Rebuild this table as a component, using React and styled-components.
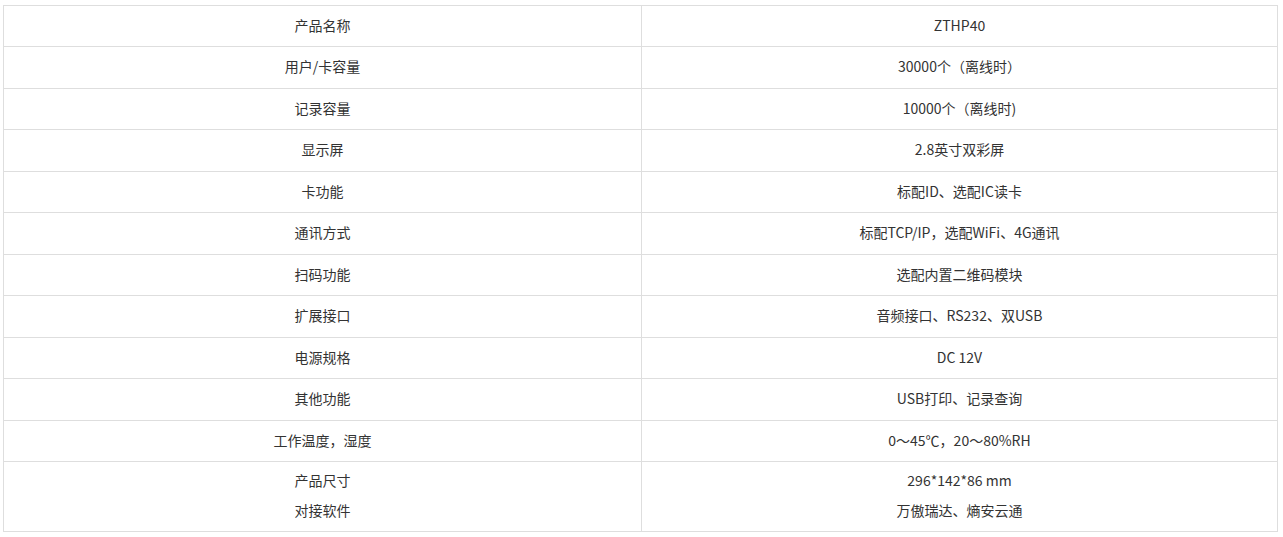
import React from 'react';
import styled, { createGlobalStyle } from 'styled-components';

const GlobalStyle = createGlobalStyle`
  body {
    margin: 0;
    background: #fff;
    font-family: "Microsoft YaHei", "Noto Sans CJK SC", sans-serif;
  }
`;

const Wrap = styled.div`
  padding: 5px 5px 0 3px;
`;

const SpecTable = styled.table`
  width: 1275px;
  border-collapse: collapse;
  table-layout: fixed;
  border: 1px solid #dedede;
`;

const Cell = styled.td`
  border: 1px solid #dedede;
  padding: ${props => (props.tall ? '3px 0 6px' : '9px 0 11px')};
  text-align: center;
  vertical-align: middle;
  font-size: 14px;
  color: #333;
  line-height: ${props => (props.tall ? '30px' : '20.45px')};
  width: ${props => props.width || 'auto'};
`;

const Line = styled.div``;

const rows = [
  ['产品名称', 'ZTHP40'],
  ['用户/卡容量', '30000个（离线时）'],
  ['记录容量', '10000个（离线时)'],
  ['显示屏', '2.8英寸双彩屏'],
  ['卡功能', '标配ID、选配IC读卡'],
  ['通讯方式', '标配TCP/IP，选配WiFi、4G通讯'],
  ['扫码功能', '选配内置二维码模块'],
  ['扩展接口', '音频接口、RS232、双USB'],
  ['电源规格', 'DC 12V'],
  ['其他功能', 'USB打印、记录查询'],
  ['工作温度，湿度', '0～45℃，20～80%RH'],
];

const App = () => {
  return (
    <Wrap>
      <GlobalStyle />
      <SpecTable>
        <tbody>
          {rows.map(([name, value], i) => (
            <tr key={i}>
              <Cell width="637px">{name}</Cell>
              <Cell>{value}</Cell>
            </tr>
          ))}
          <tr>
            <Cell tall width="637px">
              <Line>产品尺寸</Line>
              <Line>对接软件</Line>
            </Cell>
            <Cell tall>
              <Line>296*142*86 mm</Line>
              <Line>万傲瑞达、熵安云通</Line>
            </Cell>
          </tr>
        </tbody>
      </SpecTable>
    </Wrap>
  );
};

export default App;
